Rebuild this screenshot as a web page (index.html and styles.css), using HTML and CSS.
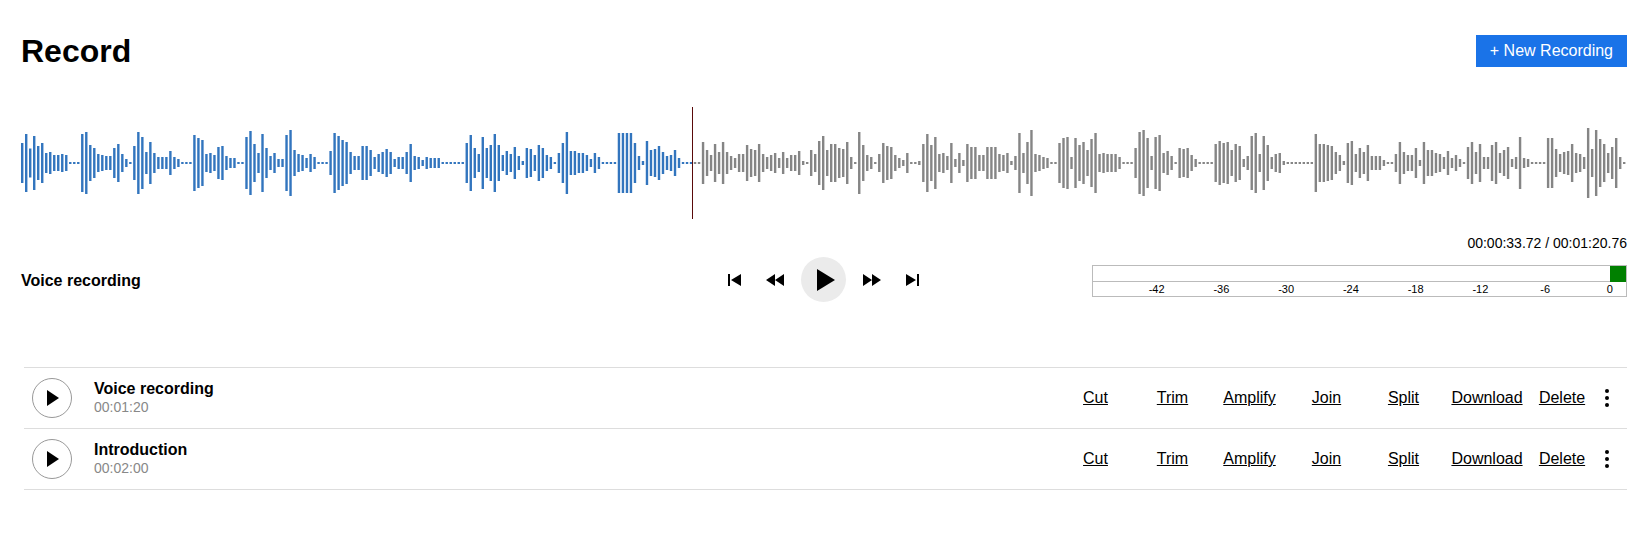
FILE: index.html
```html
<!DOCTYPE html>
<html lang="en">
<head>
<meta charset="utf-8">
<title>Record</title>
<link rel="stylesheet" href="styles.css">
</head>
<body>
<header class="header">
  <h1 class="header-title">Record</h1>
  <button class="new-button" type="button">+ New Recording</button>
</header>
<main>
  <div class="waveform">
    <svg class="waveform-bars" id="bars" preserveAspectRatio="none" role="img" aria-label="Waveform"></svg>
    <div class="playhead"></div>
  </div>

  <section class="player">
    <h2 class="player-title">Voice recording</h2>
    <div class="controls">
      <button class="control" type="button" aria-label="Previous"><svg width="14" height="12" viewBox="0 0 14 12"><path d="M0 0h2v12H0zM13 0v12L3 6z"/></svg></button>
      <button class="control" type="button" aria-label="Rewind"><svg width="18" height="12" viewBox="0 0 18 12"><path d="M9 0v12L0 6zM18 0v12L9 6z"/></svg></button>
      <button class="control control-play" type="button" aria-label="Play"><svg width="18" height="22" viewBox="0 0 18 22"><path d="M0 0l18 11L0 22z"/></svg></button>
      <button class="control" type="button" aria-label="Forward"><svg width="18" height="12" viewBox="0 0 18 12"><path d="M0 0v12l9-6zM9 0v12l9-6z"/></svg></button>
      <button class="control" type="button" aria-label="Next"><svg width="14" height="12" viewBox="0 0 14 12"><path d="M1 0v12l10-6zM12 0h2v12h-2z"/></svg></button>
    </div>
    <div class="status">
      <div class="time">00:00:33.72 / 00:01:20.76</div>
      <div class="meter">
        <div class="meter-level"><div class="meter-peak"></div></div>
        <div class="meter-scale"><span>-42</span><span>-36</span><span>-30</span><span>-24</span><span>-18</span><span>-12</span><span>-6</span><span>0</span></div>
      </div>
    </div>
  </section>

  <table class="recordings">
    <colgroup>
      <col class="col-play"><col><col class="col-action"><col class="col-action"><col class="col-action"><col class="col-action"><col class="col-action"><col class="col-download"><col class="col-delete"><col class="col-menu">
    </colgroup>
    <tbody>
      <tr>
        <td class="cell-play"><button class="row-play" type="button" aria-label="Play Voice recording"><svg width="12" height="16" viewBox="0 0 12 16"><path d="M0 0l12 8-12 8z"/></svg></button></td>
        <td class="cell-name"><div class="name">Voice recording</div><div class="duration">00:01:20</div></td>
        <td><a href="#cut">Cut</a></td>
        <td><a href="#trim">Trim</a></td>
        <td><a href="#amplify">Amplify</a></td>
        <td><a href="#join">Join</a></td>
        <td><a href="#split">Split</a></td>
        <td><a href="#download">Download</a></td>
        <td><a href="#delete">Delete</a></td>
        <td class="cell-menu"><button class="menu" type="button" aria-label="More"><svg width="4" height="18" viewBox="0 0 4 18"><circle cx="2" cy="2" r="2"/><circle cx="2" cy="9" r="2"/><circle cx="2" cy="16" r="2"/></svg></button></td>
      </tr>
      <tr>
        <td class="cell-play"><button class="row-play" type="button" aria-label="Play Introduction"><svg width="12" height="16" viewBox="0 0 12 16"><path d="M0 0l12 8-12 8z"/></svg></button></td>
        <td class="cell-name"><div class="name">Introduction</div><div class="duration">00:02:00</div></td>
        <td><a href="#cut">Cut</a></td>
        <td><a href="#trim">Trim</a></td>
        <td><a href="#amplify">Amplify</a></td>
        <td><a href="#join">Join</a></td>
        <td><a href="#split">Split</a></td>
        <td><a href="#download">Download</a></td>
        <td><a href="#delete">Delete</a></td>
        <td class="cell-menu"><button class="menu" type="button" aria-label="More"><svg width="4" height="18" viewBox="0 0 4 18"><circle cx="2" cy="2" r="2"/><circle cx="2" cy="9" r="2"/><circle cx="2" cy="16" r="2"/></svg></button></td>
      </tr>
    </tbody>
  </table>
</main>
<script src="waveform.js"></script>
</body>
</html>
```
FILE: styles.css
```css
* { box-sizing: border-box; }

body {
  margin: 0;
  padding: 32px 20px 32px 21px;
  background: #fff;
  color: #000;
  font: 16px/18px "Liberation Sans", Arial, sans-serif;
}

button {
  margin: 0;
  padding: 0;
  border: 0;
  background: none;
  color: inherit;
  font: inherit;
  cursor: pointer;
}

svg { display: block; }

.header {
  display: flex;
  justify-content: space-between;
  align-items: center;
  height: 38px;
}

.header-title {
  margin: 0;
  font-size: 32px;
  line-height: 36px;
}

.new-button {
  padding: 7px 14px;
  background: #1a73e8;
  color: #fff;
}

.waveform {
  position: relative;
  height: 112px;
  margin: 37px 0 14px;
}

.waveform-bars {
  width: 100%;
  height: 100%;
}

.bar { fill: #858585; }
.bar-played { fill: #3275be; }

.playhead {
  position: absolute;
  top: 0;
  bottom: 0;
  left: 41.75%;
  width: 1px;
  background: #5a0a0a;
}

.player {
  display: grid;
  grid-template-columns: 1fr 1fr 1fr;
  align-items: end;
}

.player-title {
  margin: 0;
  font-size: 16px;
  line-height: 42px;
}

.controls {
  display: flex;
  justify-content: center;
  align-items: center;
  gap: 12px;
}

.control {
  display: flex;
  justify-content: center;
  align-items: center;
  width: 28px;
  height: 28px;
}

.control-play {
  width: 45px;
  height: 45px;
  padding-left: 4px;
  border-radius: 50%;
  background: #ebebeb;
}

.status { padding-bottom: 5px; }

.time {
  margin-bottom: 12px;
  font-size: 14px;
  line-height: 20px;
  text-align: right;
}

.meter { border: 1px solid #bbb; }

.meter-level {
  display: flex;
  justify-content: flex-end;
  height: 16px;
  border-bottom: 1px solid #bbb;
}

.meter-peak {
  width: 16px;
  height: 16px;
  background: #008000;
}

.meter-scale {
  display: flex;
  justify-content: space-between;
  padding-left: 48px;
  font-size: 11px;
  line-height: 14px;
}

.meter-scale span {
  width: 32px;
  text-align: center;
}

.recordings {
  width: calc(100% - 3px);
  margin: 65px 0 0 3px;
  border-collapse: collapse;
  border-top: 1px solid #ddd;
  table-layout: fixed;
}

.recordings tr { border-bottom: 1px solid #ddd; }

.recordings td {
  height: 61px;
  padding: 0;
  text-align: center;
  vertical-align: middle;
}

.recordings a { color: #000; }

.col-play { width: 70px; }
.col-action { width: 77px; }
.col-download { width: 90px; }
.col-delete { width: 60px; }
.col-menu { width: 35px; }

.recordings .cell-play { padding-left: 8px; }
.recordings .cell-name { text-align: left; }
.recordings .cell-menu { padding-right: 5px; }

.row-play {
  display: flex;
  justify-content: center;
  align-items: center;
  width: 40px;
  height: 40px;
  padding-left: 2px;
  border: 1px solid #999;
  border-radius: 50%;
}

.name { font-weight: bold; }

.duration {
  color: #888;
  font-size: 14px;
}

.menu {
  display: block;
  margin: 0 auto;
}
```
FILE: waveform.js
```js
// Bar heights in pixels, one per sample window.
const peaks = `
40 58 29 54 34 40 20 22 16 16 18 16 2 2 2 58 62 36 30 18 16 14 14 30 38 18 8 2
34 62 52 22 42 20 12 12 12 24 12 8 2 2 2 56 50 46 18 20 16 32 34 14 10 10 2 2
52 64 38 20 58 30 14 20 8 8 56 66 26 18 16 10 18 12 2 2 2
24 60 54 46 42 22 14 14 34 34 26 12 18 22 28 22 8 12 12 22 38 14 12 6 12 10 10 10
2 2 2 2 2 2 40 56 30 18 52 30 36 58 36 16 24 18 32 14 4 30 28 16 36 30 16 12 2
20 40 62 24 24 20 20 16 8 20 12 2 2 2 2 60 60 60 60 40 14 4 44 26 28 34 22 14 16 26 10
2 2 2 2 2 42 26 16 38 22 42 22 14 10 18 18 36 28 26 38 18 12 16 20 10 22 10 16 16 24 4 2
26 18 44 54 26 38 38 30 28 42 12 2 62 36 16 12 2 18 40 34 32 16 10 6 20 2 2 4
38 58 36 52 18 20 14 40 8 20 6 38 32 32 16 16 32 32 32 18 16 20 4 14 60 20 42 66 18 16 12 10 2 2
40 50 52 12 50 36 42 26 48 60 18 20 18 18 18 12 2 2 2 30 62 66 50 14 52 56 20 24 14 2
30 28 30 16 8 2 2 2 2 38 44 40 42 26 38 34 8 14 54 60 18 54 36 12 18 20 4 2 2 2 2 2 2 2
58 38 38 36 34 22 16 4 40 44 18 30 22 36 14 14 14 6 2 2
18 42 22 16 16 30 6 42 26 26 20 18 12 24 10 16 8 2
32 42 22 38 12 12 36 42 20 26 32 8 12 52 10 8 2 2 2 2
50 50 28 18 22 24 38 20 18 12 70 28 66 48 38 20 32 50 12 2
`.trim().split(/\s+/).map(Number);

const STEP = 10;
const BAR = 6;
const HEIGHT = 112;
const position = 33.72 / 80.76;
const svg = document.getElementById("bars");
const width = peaks.length * STEP;
svg.setAttribute("viewBox", `0 0 ${width} ${HEIGHT}`);

peaks.forEach((peak, i) => {
  const bar = document.createElementNS("http://www.w3.org/2000/svg", "rect");
  const x = i * STEP;
  bar.setAttribute("x", x);
  bar.setAttribute("y", (HEIGHT - peak) / 2);
  bar.setAttribute("width", BAR);
  bar.setAttribute("height", peak);
  bar.setAttribute("class", x / width < position ? "bar bar-played" : "bar");
  svg.append(bar);
});
```
